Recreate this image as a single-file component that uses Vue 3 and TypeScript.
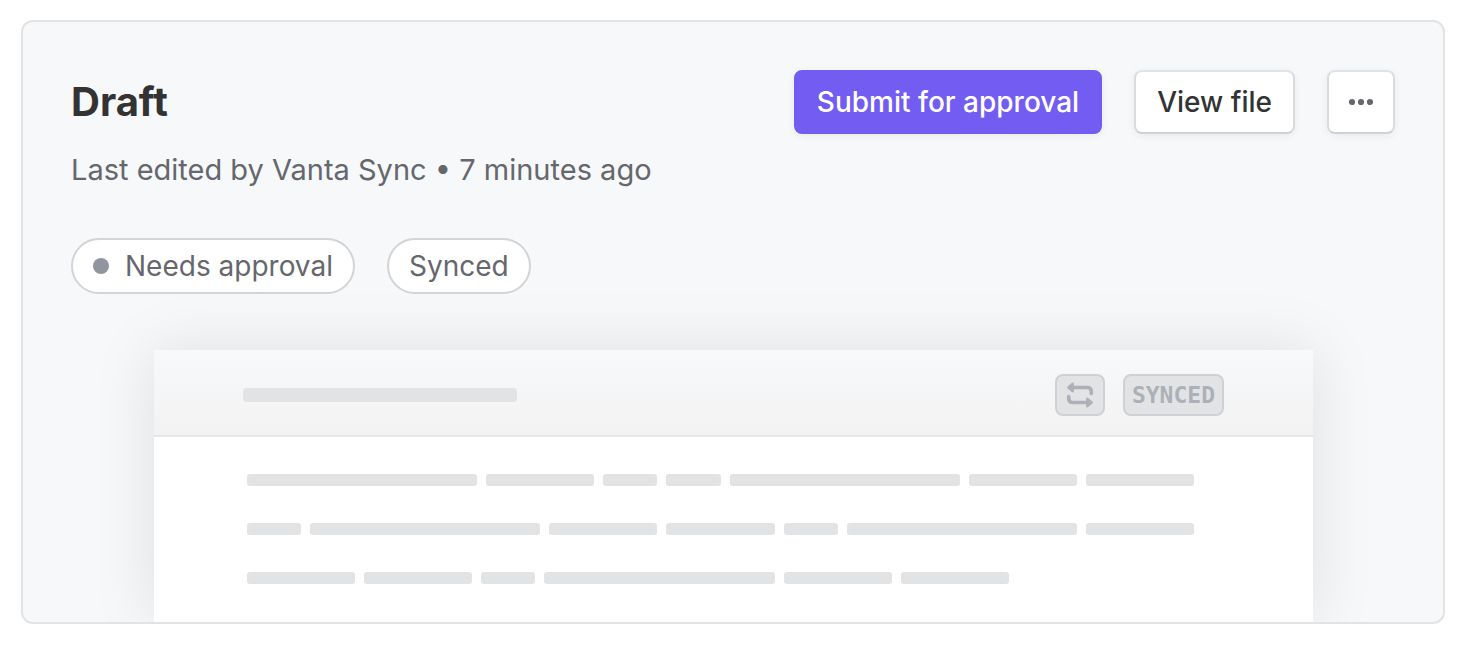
<script setup lang="ts">
type Width = 'long' | 'medium' | 'short' | 'rest'

const lines: Width[][] = [
  ['long', 'medium', 'short', 'short', 'long', 'medium', 'medium'],
  ['short', 'long', 'medium', 'medium', 'short', 'long', 'medium'],
  ['medium', 'medium', 'short', 'long', 'medium', 'medium', 'rest'],
]
</script>

<template>
  <main class="card">
    <header class="top">
      <div class="heading">
        <h1 class="title">Draft</h1>
        <p class="meta">Last edited by Vanta Sync • 7 minutes ago</p>
      </div>
      <div class="actions">
        <button type="button" class="btn primary">Submit for approval</button>
        <button type="button" class="btn">View file</button>
        <button type="button" class="btn more" aria-label="More actions">
          <svg width="24" height="8" viewBox="0 0 24 8" fill="#65676d" aria-hidden="true">
            <circle cx="3" cy="4" r="3.1" />
            <circle cx="12" cy="4" r="3.1" />
            <circle cx="21" cy="4" r="3.1" />
          </svg>
        </button>
      </div>
    </header>

    <div class="chips">
      <span class="chip"><span class="dot"></span>Needs approval</span>
      <span class="chip">Synced</span>
    </div>

    <section class="preview">
      <div class="preview-head">
        <span class="name-bar"></span>
        <div class="badges">
          <span class="badge icon">
            <svg width="28" height="28" viewBox="0 0 28 28" fill="none" stroke="#aeb0b7" stroke-width="3.6" stroke-linecap="round" stroke-linejoin="round" aria-hidden="true">
              <path d="M4 6.5H21Q25.3 6.5 25.3 10.5V12.5M2.7 15.5V17.5Q2.7 21.5 7 21.5H24" />
              <path d="M6.6 2.9L2.4 6.5L6.6 10.1ZM21.4 17.9L25.6 21.5L21.4 25.1Z" fill="#aeb0b7" stroke-width="2.6" />
            </svg>
          </span>
          <span class="badge">SYNCED</span>
        </div>
      </div>
      <div class="lines">
        <div v-for="(line, i) in lines" :key="i" class="line">
          <span v-for="(w, j) in line" :key="j" class="word" :class="w"></span>
        </div>
      </div>
    </section>
  </main>
</template>

<style>
body {
  background: #fff;
}
</style>

<style scoped>
.card {
  box-sizing: border-box;
  margin: 20px 37px 0 21px;
  padding: 48px 48px 0;
  border: 2px solid #e2e3e5;
  border-radius: 12px;
  background: #f7f8fa;
  overflow: hidden;
  font-family: Inter, "Liberation Sans", sans-serif;
  font-size: 28px;
  color: #65676d;
}

.top {
  display: flex;
  justify-content: space-between;
  align-items: flex-start;
}

.title {
  margin: 0;
  font-size: 40px;
  line-height: 64px;
  font-weight: 700;
  color: #333;
}

.meta {
  margin: 16px 0 0;
  font-size: 29px;
  line-height: 40px;
}

.actions {
  display: flex;
  gap: 32px;
}

.btn {
  box-sizing: border-box;
  height: 64px;
  padding: 0 21px;
  border: 2px solid;
  border-color: #e2e3e5 #dadbdd #d0d1d4;
  border-radius: 8px;
  background: #fff;
  box-shadow: 0 2px 8px rgba(0, 0, 0, 0.06);
  color: #333;
  font: 500 28px/40px Inter, "Liberation Sans", sans-serif;
  white-space: nowrap;
}

.primary {
  border-color: #735cf1;
  background: #735cf1;
  color: #fff;
}

.more {
  display: flex;
  align-items: center;
  padding: 0 20px;
}

.chips {
  display: flex;
  gap: 32px;
  margin-top: 48px;
}

.chip {
  display: flex;
  align-items: center;
  gap: 16px;
  padding: 0 20px;
  border: 2px solid #d3d4d5;
  border-radius: 28px;
  background: #fff;
  line-height: 52px;
}

.dot {
  width: 16px;
  height: 16px;
  border-radius: 50%;
  background: #91959d;
}

.preview {
  margin: 56px 82px 0 83px;
  background: #fff;
  box-shadow: 0 0 60px rgba(0, 0, 0, 0.1);
}

.preview-head {
  display: flex;
  align-items: center;
  justify-content: space-between;
  padding: 24px 89px 19px;
  border-bottom: 2px solid #e5e6e7;
  background: linear-gradient(#f8f9fb, #f2f2f2);
}

.name-bar {
  width: 274px;
  height: 14px;
  border-radius: 4px;
  background: #e2e3e5;
}

.badges {
  display: flex;
  gap: 18px;
}

.badge {
  box-sizing: border-box;
  display: flex;
  align-items: center;
  justify-content: center;
  height: 42px;
  padding: 0 7px;
  border: 2px solid #d0d1d4;
  border-radius: 8px;
  background: #e2e3e5;
  color: #aeb0b7;
  font: 700 23px/38px "DejaVu Sans Mono", monospace;
}

.icon {
  padding: 0 9px;
}

.lines {
  display: flex;
  flex-direction: column;
  gap: 37px;
  padding: 37px 119px 38px 93px;
}

.line {
  display: flex;
  gap: 9px;
}

.word {
  height: 12px;
  border-radius: 3px;
  background: #e2e3e5;
}

.long {
  flex: 230 1 0;
}

.medium {
  flex: 108 1 0;
}

.short {
  flex: 54 1 0;
}

.rest {
  flex: 176 1 0;
  background: none;
}
</style>
